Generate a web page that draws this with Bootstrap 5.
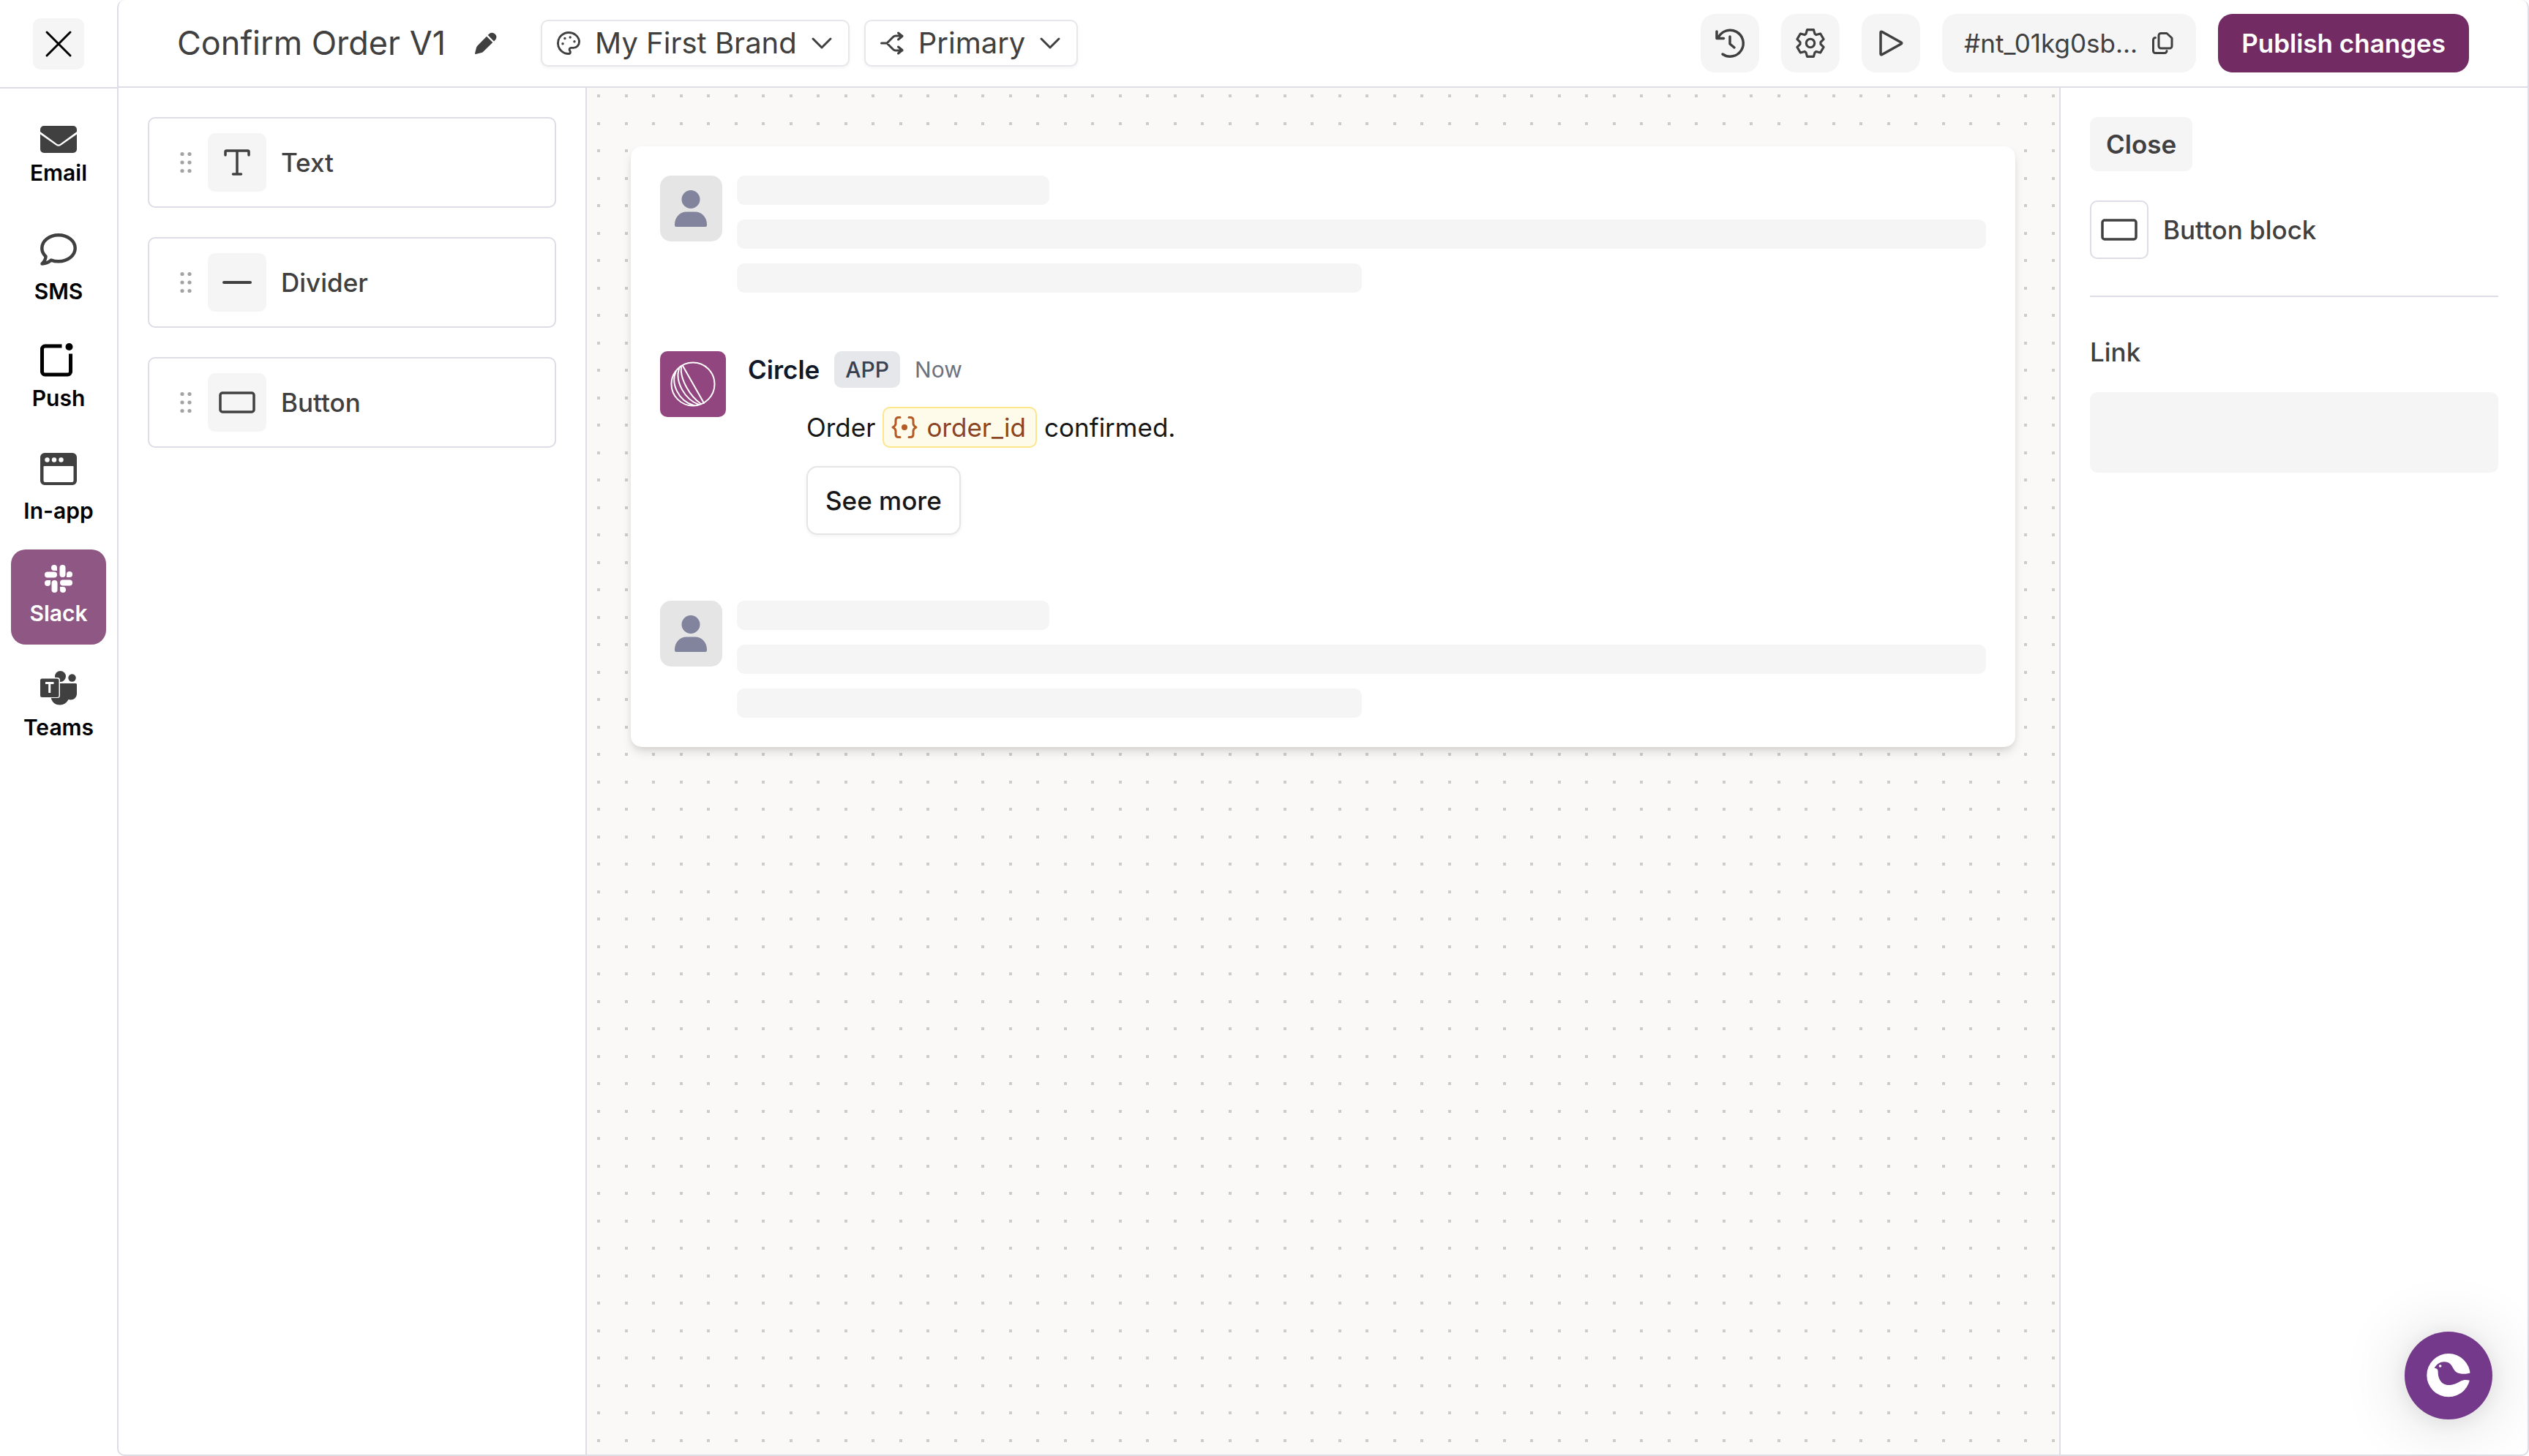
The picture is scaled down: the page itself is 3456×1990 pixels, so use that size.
<!DOCTYPE html>
<html lang="en">
<head>
<meta charset="utf-8">
<meta name="viewport" content="width=device-width, initial-scale=1">
<title>Confirm Order V1</title>
<link rel="stylesheet" href="https://cdn.jsdelivr.net/npm/bootstrap@5.3.0/dist/css/bootstrap.min.css">
<style>
  :root { --line: #dcdde5; --soft: #f5f5f5; --ink: #404040; --dot: conic-gradient(from 0deg at 4px 4px, transparent 75%, #cdccca 0); }
  body { font-family: Inter, "Liberation Sans", sans-serif; font-size: 35px; line-height: 50px; color: var(--ink); background: #fff; }
  svg { display: block; flex: none; overflow: visible; }
  .ico { fill: none; stroke: currentColor; stroke-linecap: round; stroke-linejoin: round; }
  .plain { border: 0; padding: 0; }

  /* channel rail */
  .rail { width: 160px; flex: none; }
  .rail-top { height: 121px; border-bottom: 2px solid var(--line); }
  .btn-x { width: 70px; height: 70px; border-radius: 10px; background: var(--soft); color: #000; }
  .channels { padding-top: 20px; gap: 10px; }
  .channel { width: 130px; padding: 20px 0; border-radius: 20px; font-size: 30px; line-height: 45px; font-weight: 600; color: #000; }
  .channel svg { color: var(--ink); }
  .channel.active, .channel.active svg { color: #fff; }
  .channel.active { background: #8e5784; }

  /* frame and header */
  .frame { border: 2px solid var(--line); border-top: 0; border-radius: 10px; min-width: 0; }
  .topbar { height: 120px; padding: 0 80px; border-bottom: 2px solid var(--line); }
  .topbar h1 { font-size: 45px; line-height: 60px; font-weight: 400; }
  .rename { background: none; margin: 0 60px 0 40px; }
  .picker { height: 64px; padding: 0 22px 0 20px; gap: 20px; font-size: 40px; border: 2px solid #e5e7eb; border-radius: 10px; background: #fff; color: var(--ink); box-shadow: 0 2px 4px rgba(0,0,0,.05); }
  .tools { gap: 30px; }
  .tool { height: 80px; min-width: 80px; border-radius: 20px; background: var(--soft); color: var(--ink); font-size: 35px; }
  .tool-id { padding: 0 30px; gap: 20px; }
  .tool-publish { padding: 0 32px; background: #732b63; color: #fff; font-weight: 600; }

  /* block palette */
  .blocks { width: 640px; flex: none; padding: 40px; gap: 40px; border-right: 2px solid var(--line); }
  .block { height: 124px; padding: 0 30px; border: 2px solid var(--line); border-radius: 10px; font-weight: 500; }
  .block > svg { margin-right: -10px; }
  .tile { width: 80px; height: 80px; border-radius: 10px; flex: none; }
  .tile-soft { background: var(--soft); }
  .tile-line { border: 2px solid var(--line); }
  .pickers, .block, .inspector-head, .post-head, .skeleton, .lines { gap: 20px; }

  /* canvas with dot grid, four dots per 75px tile */
  .canvas { padding: 80px 60px; min-width: 0; background-color: #faf9f7;
    background-image: var(--dot), var(--dot), var(--dot), var(--dot);
    background-size: 75px 75px;
    background-position: 14px 9px, 52px 9px, 14px 47px, 52px 47px; }
  .message { padding: 40px; border-radius: 15px; background: #fff; box-shadow: 0 8px 15px -2px rgba(0,0,0,.12), 0 4px 8px -2px rgba(0,0,0,.08); color: #171717; }
  .avatar { width: 85px; height: 90px; border-radius: 15px; background: #e5e5e5; flex: none; }
  .bar { height: 40px; border-radius: 10px; background: var(--soft); }
  .post { padding: 80px 0 90px; gap: 30px; }
  .logo { width: 90px; height: 90px; border-radius: 10px; background: #92467f; color: #fff; flex: none; }
  .app-tag { padding: 0 15px; border-radius: 10px; background: #e5e7eb; color: #374151; font-size: 30px; font-weight: 500; }
  .author { color: #111827; font-weight: 600; }
  .when { color: #6b7280; font-size: 30px; }
  .post-body { padding: 26px 0 0 80px; }
  .post-line { gap: 10px; }
  .variable { height: 56px; padding: 0 13px 0 10px; gap: 12px; border: 2px solid #fde68a; border-radius: 10px; background: #fffbeb; color: #8a4526; }
  .variable svg { color: #b45a24; }
  .btn-more { height: 94px; margin-top: 25px; padding: 0 24px; border: 2px solid #e5e5e5; border-radius: 15px; background: #fff; color: #171717; font-weight: 500; box-shadow: 0 2px 5px rgba(0,0,0,.06); }

  /* inspector */
  .inspector { width: 640px; flex: none; padding: 40px; border-left: 2px solid var(--line); font-weight: 500; }
  .btn-close-panel { height: 74px; padding: 0 22px; border-radius: 10px; background: var(--soft); color: var(--ink); font-weight: 600; }
  .inspector-head { padding: 40px 0 50px; border-bottom: 2px solid var(--line); }
  .inspector label { margin: 50px 0 30px; }
  .link-input { height: 110px; border: 0; border-radius: 10px; background: var(--soft); font-size: 35px; }

  .chat { position: fixed; right: 50px; bottom: 50px; width: 120px; height: 120px; border-radius: 50%; background: #75398b; box-shadow: 0 4px 90px rgba(0,0,0,.16), 0 4px 30px rgba(0,0,0,.08); }
</style>
</head>
<body>
<div class="d-flex vh-100">
  <aside class="rail d-flex flex-column">
    <div class="rail-top d-flex align-items-center justify-content-center">
      <button class="btn-x plain d-flex align-items-center justify-content-center" type="button" aria-label="Close editor">
        <svg class="ico" width="36" height="36" viewBox="0 0 36 36" stroke-width="3"><path d="M2 2 34 34M34 2 2 34"/></svg>
      </button>
    </div>
    <nav class="channels nav flex-column align-items-center">
      <a class="channel d-flex flex-column align-items-center text-decoration-none" href="#">
        <svg width="50" height="53" viewBox="0 0 50 53" fill="currentColor"><path d="M5 11H45a5 5 0 0 1 5 5v3L27.500 35.500a4 4 0 0 1-5 0L0 19v-3a5 5 0 0 1 5-5Z"/><path d="M0 22.500 21.500 37.500a6 6 0 0 0 7 0L50 22.500V43a5 5 0 0 1-5 5H5a5 5 0 0 1-5-5Z"/></svg>
        Email</a>
      <a class="channel d-flex flex-column align-items-center text-decoration-none" href="#">
        <svg class="ico" width="50" height="67" viewBox="0 0 50 67" stroke-width="4.500"><path d="M25 12.300C37.500 12.300 47.700 20.400 47.700 30.300S37.500 48.300 25 48.300c-3.600 0-7-.6-10-1.700C11.500 49.500 6.500 51.500 2.500 51.500c2.500-2.500 5-6 5-10C4.300 38.500 2.300 34.600 2.300 30.300 2.300 20.400 12.500 12.300 25 12.300Z"/></svg>
        SMS</a>
      <a class="channel d-flex flex-column align-items-center text-decoration-none" href="#">
        <svg width="50" height="51" viewBox="0 0 50 51" fill="none" stroke="#000" stroke-width="5"><path d="M29.500 2H6.500a4 4 0 0 0-4 4V37a4 4 0 0 0 4 4H37.500a4 4 0 0 0 4-4V12.500"/><circle cx="39.500" cy="3" r="5" fill="#000" stroke="none"/></svg>
        Push</a>
      <a class="channel d-flex flex-column align-items-center text-decoration-none" href="#">
        <svg width="50" height="59" viewBox="0 0 50 59" fill="currentColor"><path fill-rule="evenodd" d="M6 2H44a6 6 0 0 1 6 6V40a6 6 0 0 1-6 6H6a6 6 0 0 1-6-6V8a6 6 0 0 1 6-6ZM4.500 21V40a2 2 0 0 0 2 2H43.500a2 2 0 0 0 2-2V21a1 1 0 0 0-1-1H5.500a1 1 0 0 0-1 1Z"/><g fill="#fff"><circle cx="9.500" cy="11.500" r="3.200"/><circle cx="19" cy="11.500" r="3.200"/><circle cx="28.500" cy="11.500" r="3.200"/></g></svg>
        In-app</a>
      <a class="channel active d-flex flex-column align-items-center text-decoration-none" href="#" aria-current="page">
        <svg width="38" height="45" viewBox="0 0 38 45" fill="currentColor"><g transform="translate(0 1)"><path d="M17 8H13A4 4 0 1 1 17 4Z"/><rect x="0" y="9.500" width="17" height="8" rx="4"/><path d="M30 17V13A4 4 0 1 1 34 17Z"/><rect x="20.500" y="0" width="8" height="17" rx="4"/><path d="M21 30H25A4 4 0 1 1 21 34Z"/><rect x="21" y="20.500" width="17" height="8" rx="4"/><path d="M8 21V25A4 4 0 1 1 4 21Z"/><rect x="9.500" y="21" width="8" height="17" rx="4"/></g></svg>
        Slack</a>
      <a class="channel d-flex flex-column align-items-center text-decoration-none" href="#">
        <svg width="50" height="61" viewBox="0 0 50 61"><g fill="currentColor"><circle cx="27.500" cy="13.500" r="7.500"/><circle cx="43.500" cy="15.500" r="5.200"/><path d="M22 23H48.500a1.500 1.500 0 0 1 1.500 1.500V37c0 5-4 8.500-8.500 8.500-1 0-2.500-.2-3-.5C36.500 49.500 32 52.500 27 52.500 21 52.500 16.500 49 15 44V23Z"/></g><rect x="-1" y="15" width="28" height="28" rx="3.500" fill="#fff"/><rect x="0" y="16.500" width="25.500" height="25.500" rx="2.500" fill="currentColor"/><path d="M7 22.500H18.500M12.700 22.500V36" fill="none" stroke="#fff" stroke-width="3"/></svg>
        Teams</a>
    </nav>
  </aside>

  <div class="frame d-flex flex-column flex-grow-1">
    <header class="topbar d-flex align-items-center justify-content-between">
      <div class="d-flex align-items-center">
        <h1 class="m-0 text-nowrap">Confirm Order V1</h1>
        <button class="rename plain" type="button" aria-label="Rename">
          <svg width="30" height="30" viewBox="0 0 30 30" fill="#404040"><path d="M20 1.800a6 6 0 0 1 8.300 8.300L26 12.400 17.700 4.100Z"/><path d="M16 5.800 24.300 14 11.500 26.500a6 6 0 0 1-2.500 1.500L1 30a1 1 0 0 1-1-1L2 21a6 6 0 0 1 1.500-2.500Z"/></svg>
        </button>
        <div class="pickers d-flex">
          <button class="picker d-flex align-items-center" type="button" aria-haspopup="listbox">
            <svg class="ico" width="32" height="32" viewBox="1 1 22 22" stroke-width="2"><path d="M12 2C6.500 2 2 6.500 2 12s4.500 10 10 10c.93 0 1.650-.75 1.650-1.690 0-.44-.18-.83-.44-1.120-.29-.29-.44-.65-.44-1.130a1.640 1.640 0 0 1 1.670-1.670h2c3.050 0 5.550-2.500 5.550-5.550C21.970 6.010 17.460 2 12 2Z"/><g fill="currentColor" stroke-width="1.400"><circle cx="13.500" cy="6.500" r=".5"/><circle cx="17.500" cy="10.500" r=".5"/><circle cx="8.500" cy="7.500" r=".5"/><circle cx="6.500" cy="12.500" r=".5"/></g></svg>
            My First Brand
            <svg class="ico" width="28" height="16" viewBox="0 0 28 16" stroke-width="3"><path d="M2 2 14 14 26 2"/></svg>
          </button>
          <button class="picker d-flex align-items-center" type="button" aria-haspopup="listbox">
            <svg class="ico" width="32" height="30" viewBox="0 0 32 30" stroke-width="3"><path d="M1.500 15H9L17.500 6.500Q19 5 21 5H30M24.500 1 30 5.500 24.500 10M9 15 17.500 23.500Q19 25 21 25H30M24.500 20 30 24.500 24.500 29"/></svg>
            Primary
            <svg class="ico" width="28" height="16" viewBox="0 0 28 16" stroke-width="3"><path d="M2 2 14 14 26 2"/></svg>
          </button>
        </div>
      </div>
      <div class="tools d-flex align-items-center">
        <button class="tool plain d-flex align-items-center justify-content-center" type="button" aria-label="History">
          <svg class="ico" width="40" height="40" viewBox="0 0 40 40" stroke-width="3.500"><path d="M4 12.500A18 18 0 1 1 10 35M2 4V13.500H11.500M20 11V21L26 26"/></svg>
        </button>
        <button class="tool plain d-flex align-items-center justify-content-center" type="button" aria-label="Settings">
          <svg class="ico" width="40" height="40" viewBox="-63 -63 126 126" stroke-width="10"><path d="M-19-40-14-58H14L19-40 25-36 43-41 57-17 44-4V4L57 17 43 41 25 36 19 40 14 58H-14L-19 40-25 36-43 41-57 17-44 4V-4L-57-17-43-41-25-36Z"/><circle r="18"/></svg>
        </button>
        <button class="tool plain d-flex align-items-center justify-content-center" type="button" aria-label="Preview">
          <svg class="ico" width="34" height="36" viewBox="0 0 34 36" stroke-width="3.500"><path d="M3 3.500V32.500Q3 34.500 5 33.500L31 19Q32.500 18 31 17L5 2.500Q3 1.500 3 3.500Z"/></svg>
        </button>
        <button class="tool tool-id border-0 d-flex align-items-center" type="button">
          #nt_01kg0sb...
          <svg class="ico" width="30" height="30" viewBox="0 0 30 30" stroke-width="3"><path d="M12 1.500H20L27 8V19a3 3 0 0 1-3 3H12a3 3 0 0 1-3-3V4.500a3 3 0 0 1 3-3ZM4.500 7.500a3 3 0 0 0-3 3V25.500a3 3 0 0 0 3 3H17a3 3 0 0 0 3-3"/></svg>
        </button>
        <button class="tool tool-publish border-0" type="button">Publish changes</button>
      </div>
    </header>

    <div class="d-flex flex-grow-1">
      <section class="blocks d-flex flex-column" aria-label="Blocks">
        <div class="block d-flex align-items-center">
          <svg width="40" height="40" viewBox="0 0 40 40" fill="#a3a3a3"><g id="grip"><circle cx="15" cy="8.500" r="2.600"/><circle cx="25" cy="8.500" r="2.600"/><circle cx="15" cy="20" r="2.600"/><circle cx="25" cy="20" r="2.600"/><circle cx="15" cy="31.500" r="2.600"/><circle cx="25" cy="31.500" r="2.600"/></g></svg>
          <span class="tile tile-soft d-flex align-items-center justify-content-center"><svg class="ico" width="36" height="36" viewBox="0 0 36 36" stroke-width="3.500"><path d="M2 8V3.500Q2 2 3.500 2H32.500Q34 2 34 3.500V8M18 2V34M12.500 34H23.500"/></svg></span>
          Text
        </div>
        <div class="block d-flex align-items-center">
          <svg width="40" height="40" viewBox="0 0 40 40" fill="#a3a3a3"><use href="#grip"/></svg>
          <span class="tile tile-soft d-flex align-items-center justify-content-center"><svg class="ico" width="40" height="4" viewBox="0 0 40 4" stroke-width="4"><path d="M2 2H38"/></svg></span>
          Divider
        </div>
        <div class="block d-flex align-items-center">
          <svg width="40" height="40" viewBox="0 0 40 40" fill="#a3a3a3"><use href="#grip"/></svg>
          <span class="tile tile-soft d-flex align-items-center justify-content-center"><svg class="ico" width="50" height="30" viewBox="0 0 50 30" stroke-width="3.500"><rect x="2" y="2" width="46" height="26" rx="3"/></svg></span>
          Button
        </div>
      </section>

      <main class="canvas flex-grow-1">
        <article class="message">
          <div class="d-flex skeleton">
            <div class="avatar"><svg width="85" height="90" viewBox="0 0 85 90" fill="#82839c"><circle cx="42" cy="32.500" r="12.500"/><path d="M36 49.500H48A16 17 0 0 1 64 66.500V68a2 2 0 0 1-2 2H22a2 2 0 0 1-2-2V66.500A16 17 0 0 1 36 49.500Z"/></svg></div>
            <div class="lines d-flex flex-column flex-grow-1"><div class="bar w-25"></div><div class="bar w-100"></div><div class="bar w-50"></div></div>
          </div>
          <div class="post d-flex">
            <div class="logo"><svg class="ico" width="90" height="90" viewBox="0 0 90 90" stroke-width="2"><circle cx="45" cy="45" r="29.500"/><path d="M31 20 60 71M29 22C27 38 41 62 56 72M26 24C20 42 34 66 53 73M22 27C14 44 25 68 46 74"/></svg></div>
            <div class="flex-grow-1">
              <div class="d-flex align-items-center post-head"><span class="author">Circle</span><span class="app-tag">APP</span><span class="when">Now</span></div>
              <div class="post-body">
                <div class="d-flex align-items-center post-line">Order
                  <span class="variable d-flex align-items-center"><svg class="ico" width="36" height="30" viewBox="0 0 36 30" stroke-width="3"><path d="M12 1.500H10Q6 1.500 6 5.500V10Q6 13 2 15 6 17 6 20V24.500Q6 28.500 10 28.500H12M24 1.500H26Q30 1.500 30 5.500V10Q30 13 34 15 30 17 30 20V24.500Q30 28.500 26 28.500H24"/><circle cx="18" cy="15" r="2.500" fill="currentColor"/></svg>order_id</span>
                  confirmed.</div>
                <button class="btn-more" type="button">See more</button>
              </div>
            </div>
          </div>
          <div class="d-flex skeleton">
            <div class="avatar"><svg width="85" height="90" viewBox="0 0 85 90" fill="#82839c"><circle cx="42" cy="32.500" r="12.500"/><path d="M36 49.500H48A16 17 0 0 1 64 66.500V68a2 2 0 0 1-2 2H22a2 2 0 0 1-2-2V66.500A16 17 0 0 1 36 49.500Z"/></svg></div>
            <div class="lines d-flex flex-column flex-grow-1"><div class="bar w-25"></div><div class="bar w-100"></div><div class="bar w-50"></div></div>
          </div>
        </article>
      </main>

      <aside class="inspector">
        <button class="btn-close-panel border-0" type="button">Close</button>
        <div class="inspector-head d-flex align-items-center">
          <span class="tile tile-line d-flex align-items-center justify-content-center"><svg class="ico" width="50" height="30" viewBox="0 0 50 30" stroke-width="3.500"><rect x="2" y="2" width="46" height="26" rx="3"/></svg></span>
          Button block
        </div>
        <label class="d-block" for="link">Link</label>
        <input class="form-control link-input" id="link" type="text">
      </aside>
    </div>
  </div>
</div>
<button class="chat plain" type="button" aria-label="Open chat">
  <svg width="120" height="120" viewBox="0 0 360 360"><circle cx="180" cy="179" r="89" fill="#fff"/><path fill="#75398b" d="M122 149C130 138 140 124 163 124 205 124 190 172 235 173 250 174 262 172 275 167V204C262 197 245 195 228 204 212 212 203 219 181 219 148 219 137 190 137 165 137 155 134 151 122 149Z"/><circle cx="146" cy="141" r="5.500" fill="#fff"/></svg>
</button>
<script src="https://cdn.jsdelivr.net/npm/bootstrap@5.3.0/dist/js/bootstrap.bundle.min.js"></script>
</body>
</html>
